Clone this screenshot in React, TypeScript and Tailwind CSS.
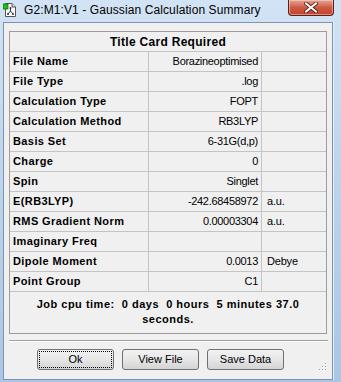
import React from 'react'

type Row = { label: string; value: string; unit?: string }

const rows: Row[] = [
  { label: 'File Name', value: 'Borazineoptimised' },
  { label: 'File Type', value: '.log' },
  { label: 'Calculation Type', value: 'FOPT' },
  { label: 'Calculation Method', value: 'RB3LYP' },
  { label: 'Basis Set', value: '6-31G(d,p)' },
  { label: 'Charge', value: '0' },
  { label: 'Spin', value: 'Singlet' },
  { label: 'E(RB3LYP)', value: '-242.68458972', unit: 'a.u.' },
  { label: 'RMS Gradient Norm', value: '0.00003304', unit: 'a.u.' },
  { label: 'Imaginary Freq', value: '' },
  { label: 'Dipole Moment', value: '0.0013', unit: 'Debye' },
  { label: 'Point Group', value: 'C1' },
]

const AppIcon = () => (
  <svg width="13" height="14" viewBox="0 0 13 14">
    <path d="M2.5 0.5 H9 L12.5 4 V13.5 H2.5 Z" fill="#fff" stroke="#555" />
    <path d="M9 0.5 V4 H12.5" fill="#ddd" stroke="#555" />
    <rect x="0" y="1" width="5" height="5" fill="#17c21a" stroke="#0a6b0a" strokeWidth="0.8" />
    <path d="M7.5 5 V8 M7.5 8 L5 11 M7.5 8 L10 11" stroke="#333" strokeWidth="1" fill="none" />
    <circle cx="7.5" cy="5" r="1" fill="#333" />
    <circle cx="5" cy="11" r="1" fill="#333" />
    <circle cx="10" cy="11" r="1" fill="#333" />
  </svg>
)

const CloseButton = () => (
  <div className="w-[46px] h-[16px] rounded-b-[4px] border border-t-0 border-[#5a2019] bg-gradient-to-b from-[#e3a493] via-[#cf5a43] to-[#c2412b] flex items-center justify-center shadow-[inset_0_0_0_1px_rgba(255,220,210,0.5)]">
    <svg width="14" height="11" viewBox="0 0 14 11">
      <path d="M2 1.5 L12 9.5 M12 1.5 L2 9.5" stroke="#4a1a12" strokeWidth="3.6" strokeLinecap="square" />
      <path d="M2 1.5 L12 9.5 M12 1.5 L2 9.5" stroke="#fff" strokeWidth="2" strokeLinecap="square" />
    </svg>
  </div>
)

const Btn = ({ label, focused }: { label: string; focused?: boolean }) => (
  <div className="w-[77px] h-[21px] rounded-[3px] border border-[#707070] bg-gradient-to-b from-[#f2f2f2] via-[#e6e6e6] to-[#d4d4d4] p-[2px]">
    <div
      className={`w-full h-full flex items-center justify-center text-[11px] text-black ${
        focused ? 'outline outline-1 outline-dotted outline-black' : ''
      }`}
    >
      {label}
    </div>
  </div>
)

const Grip = () => (
  <svg width="10" height="10" viewBox="0 0 10 10">
    {[
      [7, 1],
      [4, 4],
      [7, 4],
      [1, 7],
      [4, 7],
      [7, 7],
    ].map(([x, y], i) => (
      <g key={i}>
        <rect x={x + 1} y={y + 1} width="1" height="1" fill="#fff" />
        <rect x={x} y={y} width="1" height="1" fill="#a0a0a0" />
      </g>
    ))}
  </svg>
)

export default function App() {
  return (
    <div
      className="w-[341px] h-[382px] flex flex-col overflow-hidden bg-gradient-to-b from-[#d2e3f5] via-[#bcd3ec] to-[#aac6e6]"
      style={{ fontFamily: '"Liberation Sans", Arial, sans-serif' }}
    >
      {/* title bar */}
      <div className="h-[22px] flex items-start shrink-0">
        <div className="ml-[3px] mt-[3px]">
          <AppIcon />
        </div>
        <div className="ml-[8px] mt-[3px] text-[12px] leading-[14px] text-black tracking-[0.1px]">
          G2:M1:V1 - Gaussian Calculation Summary
        </div>
        <div className="flex-1" />
        <div className="mr-[7px]">
          <CloseButton />
        </div>
      </div>

      <div className="flex flex-1">
        <div className="w-[3px]" />
        <div className="w-[330px] h-[358px] border border-[#7f93ad] bg-[#f0f0f0] flex flex-col">
          {/* table */}
          <div className="ml-[5px] mt-[8px] w-[318px] border border-[#9c9c9c] text-black">
            <div className="h-[20px] border-b border-[#c4c4c4] flex items-center justify-center text-[12px] font-bold tracking-[0.3px]">
              Title Card Required
            </div>
            {rows.map((r) => (
              <div key={r.label} className="h-[20px] border-b border-[#c4c4c4] flex text-[11px]">
                <div className="w-[139px] border-r border-[#c4c4c4] pl-[3px] flex items-center font-bold tracking-[0.4px]">
                  {r.label}
                </div>
                <div className="w-[113px] border-r border-[#c4c4c4] pr-[3px] flex items-center justify-end tracking-[-0.3px]">
                  {r.value}
                </div>
                <div className="flex-1 pl-[5px] flex items-center tracking-[-0.2px]">{r.unit}</div>
              </div>
            ))}
            <div className="h-[41px] flex flex-col items-center justify-center text-center text-[11px] font-bold leading-[15px] tracking-[0.5px] pb-[1px]">
              <div className="whitespace-pre">Job cpu time:  0 days  0 hours  5 minutes 37.0</div>
              <div>seconds.</div>
            </div>
          </div>

          {/* separator */}
          <div className="ml-[5px] mt-[6px] w-[319px] h-[2px] border-t border-[#a0a0a0] border-b border-b-white" />

          {/* buttons */}
          <div className="flex items-start mt-[7px] pl-[33px] flex-1">
            <div className="flex gap-[8px]">
              <Btn label="Ok" focused />
              <Btn label="View File" />
              <Btn label="Save Data" />
            </div>
            <div className="flex-1" />
            <div className="self-end mb-[7px] mr-[4px]">
              <Grip />
            </div>
          </div>
        </div>
        <div className="flex-1 border-l border-[#e4eef9]" />
      </div>
      <div className="h-[2px] shrink-0" />
    </div>
  )
}
